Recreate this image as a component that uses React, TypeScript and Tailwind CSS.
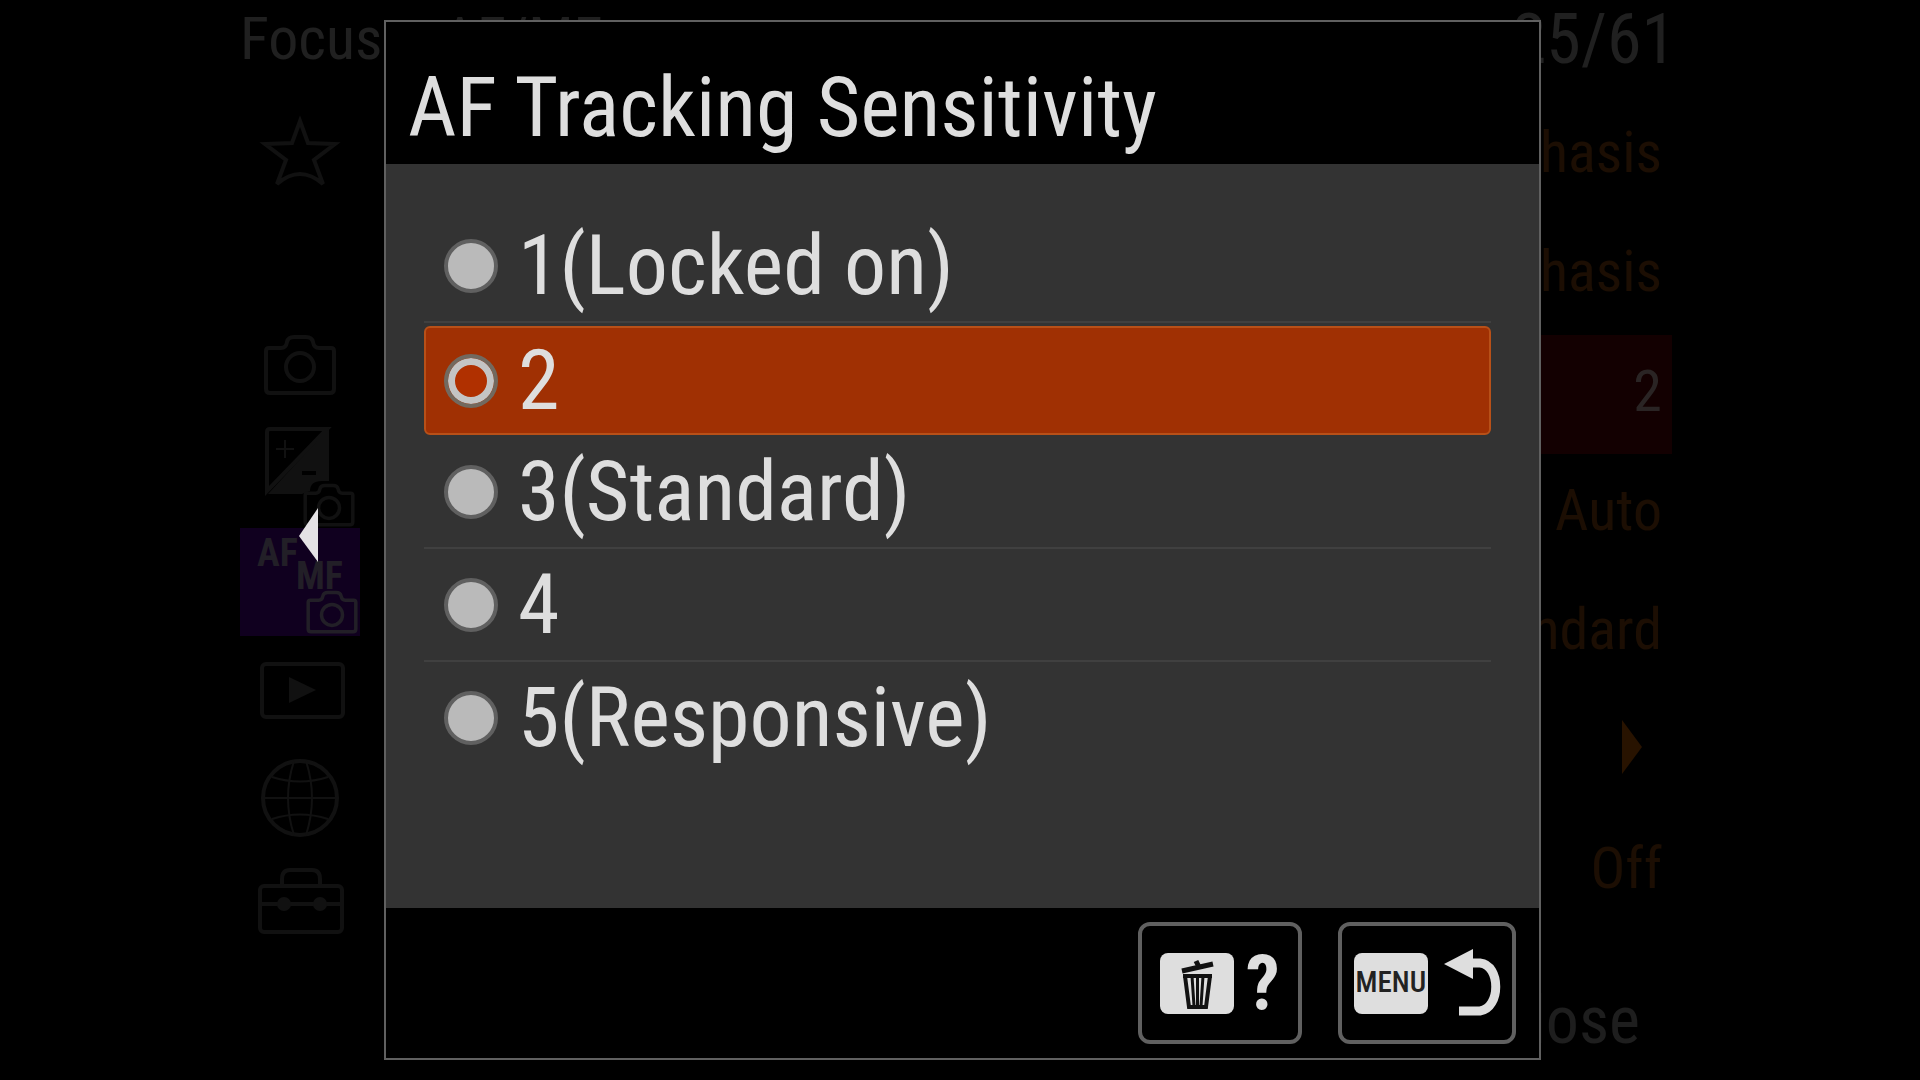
import React, { useState } from 'react';
import clsx from 'clsx';

const OPTIONS = [
  { value: '1', label: '1(Locked on)' },
  { value: '2', label: '2' },
  { value: '3', label: '3(Standard)' },
  { value: '4', label: '4' },
  { value: '5', label: '5(Responsive)' },
];

// Current values in the settings list behind the dialog, null = submenu arrow
const SETTINGS: (string | null)[] = [
  'Balanced Emphasis',
  'Balanced Emphasis',
  '2',
  'Auto',
  'Standard',
  null,
  'Off',
];

const CAMERA_PATH =
  'M29 36 h12 q5 0 6 -6 q1 -5 7 -5 h12 q6 0 7 5 q1 6 6 6 h12 q3 0 3 3 v38 q0 4 -4 4 h-60 q-4 0 -4 -4 v-38 q0 -3 3 -3 z';

/** Small camera shown in the corner of the exposure and focus tabs */
function SmallCamera({ x, y }: { x: number; y: number }) {
  return (
    <g transform={`translate(${x} ${y}) scale(0.7)`} strokeWidth="5">
      <path d={CAMERA_PATH} />
      <circle cx="60" cy="57" r="15" />
    </g>
  );
}

const TABS = [
  { id: 'My Menu', icon: <path d="M60 25 L68 47 L95 48 L74 64 L83 88 Q60 68 37 88 L46 64 L25 48 L52 47 Z" /> },
  { id: 'Empty', icon: null },
  {
    id: 'Shooting',
    icon: (
      <>
        <path d={CAMERA_PATH} />
        <circle cx="60" cy="55" r="14" />
      </>
    ),
  },
  {
    id: 'Exposure',
    icon: (
      <>
        <path d="M87 9 H30 q-3 0 -3 3 V71 z" />
        <path d="M89 8 V61 H84 Q70 60 70 71 L62 74 H28 z" fill="currentColor" stroke="none" />
        <path d="M36 29 h18 M45 20 v18" strokeWidth="2" />
        <path d="M62 53 h14" stroke="#000" />
        <SmallCamera x={47} y={48} />
      </>
    ),
  },
  {
    id: 'Focus',
    icon: (
      <>
        <g fill="currentColor" stroke="none" className="font-['Roboto_Condensed','Roboto',sans-serif] text-[38px] font-bold">
          <text x="17" y="38">AF</text>
          <text x="56" y="61">MF</text>
        </g>
        <SmallCamera x={50} y={47} />
      </>
    ),
  },
  {
    id: 'Playback',
    icon: (
      <>
        <rect x="22" y="28" width="81" height="53" rx="4" />
        <path d="M49 41 L76 54 L49 67 z" fill="currentColor" stroke="none" />
      </>
    ),
  },
  {
    id: 'Network',
    icon: (
      <>
        <circle cx="60" cy="54" r="37" />
        <path d="M23 54 H97 M32 33 Q60 42 88 33 M32 75 Q60 66 88 75" strokeWidth="2" />
        <path d="M54 17 Q42 54 54 91 M66 17 Q78 54 66 91" strokeWidth="2" />
      </>
    ),
  },
  {
    id: 'Setup',
    icon: (
      <>
        <rect x="20" y="34" width="82" height="46" rx="4" />
        <path d="M42 33 v-6 q0 -9 8 -9 h22 q8 0 8 9 v6" />
        <path d="M20 52 H102" />
        <circle cx="44" cy="52" r="7" fill="currentColor" stroke="none" />
        <circle cx="80" cy="52" r="7" fill="currentColor" stroke="none" />
      </>
    ),
  },
];

function MenuScreen() {
  return (
    <div className="mx-auto flex min-h-screen w-3/4 flex-col">
      <header className="flex h-24 items-start justify-between leading-[78px] text-[#202020]">
        <div className="flex gap-[60px] text-[60px]">
          <span>Focus</span>
          <span>AF/MF</span>
        </div>
        <span className="pr-1 text-[70px]">25/61</span>
      </header>

      <div className="flex flex-1 justify-between">
        <nav className="flex w-[120px] flex-col">
          {TABS.map((tab) => (
            <button
              key={tab.id}
              aria-label={tab.id}
              className={clsx('h-[108px] w-full', tab.id === 'Focus' ? 'bg-[#10001f] text-[#221f27]' : 'text-[#111111]')}
            >
              {tab.icon && (
                <svg viewBox="0 0 120 108" className="h-full w-full" fill="none" stroke="currentColor" strokeWidth="4">
                  {tab.icon}
                </svg>
              )}
            </button>
          ))}
        </nav>

        <div className="ml-12 flex flex-1 flex-col">
          <ul className="flex flex-1 flex-col text-[58px] leading-none text-[#1c0e03]">
            {SETTINGS.map((value, i) => (
              <li
                key={i}
                className={clsx(
                  'mr-2 flex flex-1 items-center justify-end pb-2 pr-[10px]',
                  value === '2' && 'bg-[#130001] text-[#2a2424]',
                )}
              >
                {value ?? (
                  <svg viewBox="0 0 20 54" className="mb-1 mr-5 h-[54px] w-5">
                    <path d="M0 0 L20 27 L0 54 z" fill="#281300" />
                  </svg>
                )}
              </li>
            ))}
          </ul>
          <div className="flex h-[148px] items-center justify-end pr-10 text-[66px] text-[#1e1e1e]">
            <span className="pt-[30px] leading-none">Close</span>
          </div>
        </div>
      </div>
    </div>
  );
}

function TrashIcon() {
  return (
    <svg viewBox="0 0 36 52" className="h-[52px] w-9" fill="none" stroke="#111" strokeWidth="3">
      <path d="M3 14 L34 7" strokeWidth="5" />
      <path d="M17 4 l3 6" strokeWidth="5" />
      <path d="M4 19 H33" strokeWidth="4" />
      <path d="M6 19 L10 50 H27 L31 19" strokeWidth="4" />
      <path d="M13 19 L15 49 M18.5 19 V49 M24 19 L22 49" />
    </svg>
  );
}

function BackIcon() {
  return (
    <svg viewBox="0 0 58 68" className="h-[68px] w-[58px]">
      <path d="M0 15 L29 0 V30 z" fill="#dedede" />
      <path d="M26 14 H36 C57 16 57 59 36 62 H15" fill="none" stroke="#dedede" strokeWidth="9" />
    </svg>
  );
}

export default function App() {
  const [selected, setSelected] = useState('2');

  return (
    <main className="relative min-h-screen overflow-hidden bg-black font-['Roboto_Condensed','Roboto',sans-serif]">
      <MenuScreen />

      <svg viewBox="0 0 20 54" className="absolute left-[299px] top-[508px] h-[54px] w-5">
        <path d="M19 0 L0 28 L19 54 z" fill="#e4e2e4" />
      </svg>

      <div
        role="dialog"
        aria-labelledby="dialog-title"
        className="absolute inset-y-5 left-1/5 flex w-[60.25%] flex-col border-2 border-[#606060] bg-[#333]"
      >
        <header className="flex h-[142px] items-center bg-black pl-[22px] pt-[30px]">
          <h1 id="dialog-title" className="text-[84px] leading-none text-[#dedede]">
            AF Tracking Sensitivity
          </h1>
        </header>

        <fieldset className="flex-1 pl-[38px] pr-12 pt-[46px]">
          {OPTIONS.map((option, i) => {
            const active = option.value === selected;
            const last = i === OPTIONS.length - 1;
            return (
              <div
                key={option.value}
                className={clsx('h-[113px]', active ? 'pb-px pt-[3px]' : 'border-b-2', !active && (last ? 'border-transparent' : 'border-[#404040]'))}
              >
                <label
                  className={clsx(
                    'flex h-full items-center gap-5 rounded-md border-2 pl-[18px]',
                    active ? 'border-[#b85018] bg-[#a03003]' : 'border-transparent',
                  )}
                >
                  <input
                    type="radio"
                    name="sensitivity"
                    value={option.value}
                    checked={active}
                    onChange={() => setSelected(option.value)}
                    className={clsx(
                      'size-[54px] shrink-0 appearance-none rounded-full border-4',
                      active
                        ? 'border-[#72695f] bg-[#b03000] shadow-[inset_0_0_0_7px_#c4c4c4]'
                        : 'border-[#606060] bg-[#bababa]',
                    )}
                  />
                  <span className="text-[84px] leading-none text-[#dedede]">{option.label}</span>
                </label>
              </div>
            );
          })}
        </fieldset>

        <footer className="flex h-[150px] items-center justify-end gap-9 bg-black pr-[23px]">
          <button aria-label="Help" className="flex h-[122px] w-[164px] items-center gap-3 rounded-xl border-4 border-[#606060] pl-[18px]">
            <span className="flex h-[61px] w-[74px] items-center justify-center rounded-lg bg-[#dedede]">
              <TrashIcon />
            </span>
            <span className="text-[76px] font-bold leading-none text-[#dedede]">?</span>
          </button>
          <button aria-label="Back" className="flex h-[122px] w-[178px] items-center gap-4 rounded-xl border-4 border-[#606060] pl-3">
            <span className="flex h-[61px] w-[74px] items-center justify-center rounded-lg bg-[#dedede] text-[29px] font-medium text-[#222]">
              MENU
            </span>
            <BackIcon />
          </button>
        </footer>
      </div>
    </main>
  );
}
